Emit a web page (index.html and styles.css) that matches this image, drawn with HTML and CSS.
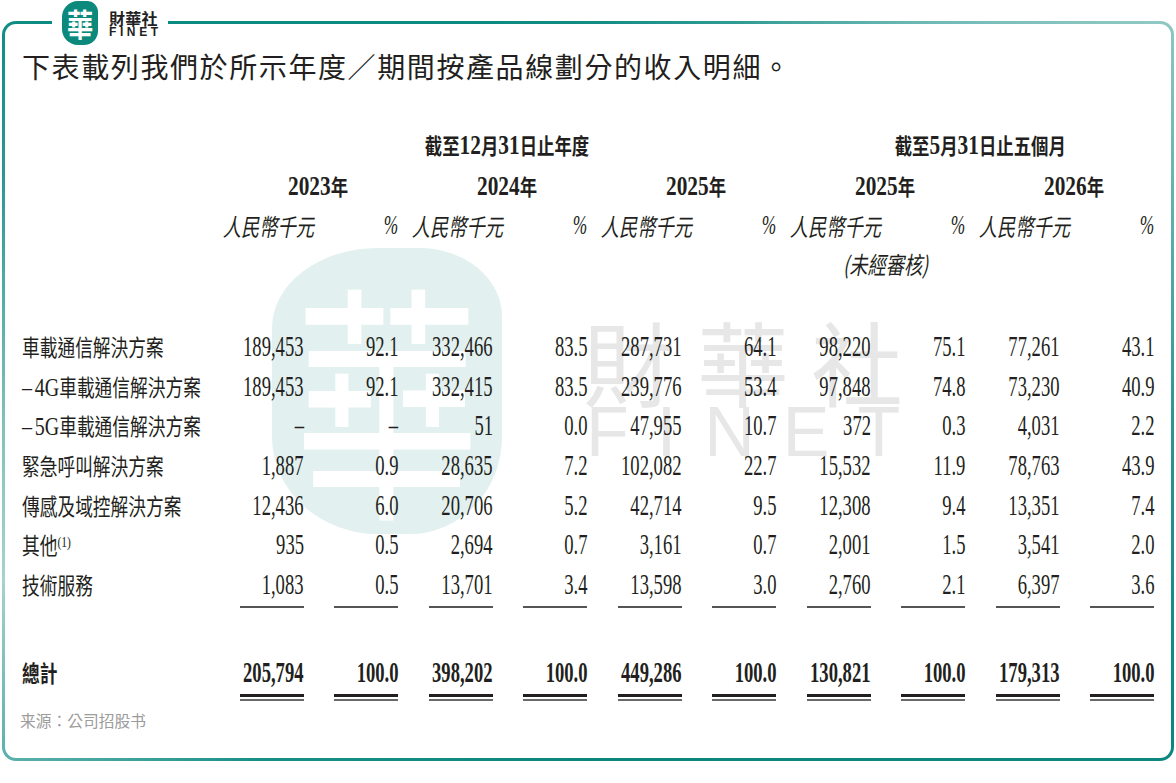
FILE: index.html
```html
<!DOCTYPE html>
<html lang="zh-Hant">
<head>
<meta charset="utf-8">
<title>收入明細</title>
<link rel="stylesheet" href="styles.css">
</head>
<body>
<div class="frame">
  <div class="brand">
    <div class="badge"><span>華</span></div>
    <div class="brand-text">
      <div class="bt-cn">財華社</div>
      <div class="bt-en">FINET</div>
    </div>
  </div>
  <div class="card">
    <div class="wm-logo"><span>華</span></div>
    <div class="wm-text">
      <div class="wm-cn">財華社</div>
      <div class="wm-en">FINET</div>
    </div>

    <h1 class="title">下表載列我們於所示年度／期間按產品線劃分的收入明細。</h1>

    <div class="tbl">
      <!-- group header -->
      <div></div>
      <div class="hd grp g6"><span class="ht b">截至<span class="d">12</span>月<span class="d">31</span>日止年度</span></div>
      <div class="hd grp g4"><span class="ht b">截至<span class="d">5</span>月<span class="d">31</span>日止五個月</span></div>
      <!-- years -->
      <div></div>
      <div class="hd grp g2"><span class="ht b"><span class="d">2023</span>年</span></div>
      <div class="hd grp g2"><span class="ht b"><span class="d">2024</span>年</span></div>
      <div class="hd grp g2"><span class="ht b"><span class="d">2025</span>年</span></div>
      <div class="hd grp g2"><span class="ht b"><span class="d">2025</span>年</span></div>
      <div class="hd grp g2"><span class="ht b"><span class="d">2026</span>年</span></div>
      <!-- units -->
      <div></div>
      <div class="hd unit"><span class="ut">人民幣千元</span></div><div class="hd pc"><span class="pt">%</span></div>
      <div class="hd unit"><span class="ut">人民幣千元</span></div><div class="hd pc"><span class="pt">%</span></div>
      <div class="hd unit"><span class="ut">人民幣千元</span></div><div class="hd pc"><span class="pt">%</span></div>
      <div class="hd unit"><span class="ut">人民幣千元</span></div><div class="hd pc"><span class="pt">%</span></div>
      <div class="hd unit"><span class="ut">人民幣千元</span></div><div class="hd pc"><span class="pt">%</span></div>
      <!-- unaudited -->
      <div class="skip7"></div>
      <div class="hd audit g2"><span class="ut">(未經審核)</span></div>
      <div class="g2"></div>
      <!-- spacer -->
      <div class="full"></div>

      <div class="lb"><span class="lt">車載通信解決方案</span></div>
      <div class="c"><span class="n">189,453</span></div><div class="c"><span class="n">92.1</span></div>
      <div class="c"><span class="n">332,466</span></div><div class="c"><span class="n">83.5</span></div>
      <div class="c"><span class="n">287,731</span></div><div class="c"><span class="n">64.1</span></div>
      <div class="c"><span class="n">98,220</span></div><div class="c"><span class="n">75.1</span></div>
      <div class="c"><span class="n">77,261</span></div><div class="c"><span class="n">43.1</span></div>

      <div class="lb"><span class="lt"><span class="d">– 4G</span>車載通信解決方案</span></div>
      <div class="c"><span class="n">189,453</span></div><div class="c"><span class="n">92.1</span></div>
      <div class="c"><span class="n">332,415</span></div><div class="c"><span class="n">83.5</span></div>
      <div class="c"><span class="n">239,776</span></div><div class="c"><span class="n">53.4</span></div>
      <div class="c"><span class="n">97,848</span></div><div class="c"><span class="n">74.8</span></div>
      <div class="c"><span class="n">73,230</span></div><div class="c"><span class="n">40.9</span></div>

      <div class="lb"><span class="lt"><span class="d">– 5G</span>車載通信解決方案</span></div>
      <div class="c"><span class="n">–</span></div><div class="c"><span class="n">–</span></div>
      <div class="c"><span class="n">51</span></div><div class="c"><span class="n">0.0</span></div>
      <div class="c"><span class="n">47,955</span></div><div class="c"><span class="n">10.7</span></div>
      <div class="c"><span class="n">372</span></div><div class="c"><span class="n">0.3</span></div>
      <div class="c"><span class="n">4,031</span></div><div class="c"><span class="n">2.2</span></div>

      <div class="lb"><span class="lt">緊急呼叫解決方案</span></div>
      <div class="c"><span class="n">1,887</span></div><div class="c"><span class="n">0.9</span></div>
      <div class="c"><span class="n">28,635</span></div><div class="c"><span class="n">7.2</span></div>
      <div class="c"><span class="n">102,082</span></div><div class="c"><span class="n">22.7</span></div>
      <div class="c"><span class="n">15,532</span></div><div class="c"><span class="n">11.9</span></div>
      <div class="c"><span class="n">78,763</span></div><div class="c"><span class="n">43.9</span></div>

      <div class="lb"><span class="lt">傳感及域控解決方案</span></div>
      <div class="c"><span class="n">12,436</span></div><div class="c"><span class="n">6.0</span></div>
      <div class="c"><span class="n">20,706</span></div><div class="c"><span class="n">5.2</span></div>
      <div class="c"><span class="n">42,714</span></div><div class="c"><span class="n">9.5</span></div>
      <div class="c"><span class="n">12,308</span></div><div class="c"><span class="n">9.4</span></div>
      <div class="c"><span class="n">13,351</span></div><div class="c"><span class="n">7.4</span></div>

      <div class="lb"><span class="lt">其他<span class="sup">(1)</span></span></div>
      <div class="c"><span class="n">935</span></div><div class="c"><span class="n">0.5</span></div>
      <div class="c"><span class="n">2,694</span></div><div class="c"><span class="n">0.7</span></div>
      <div class="c"><span class="n">3,161</span></div><div class="c"><span class="n">0.7</span></div>
      <div class="c"><span class="n">2,001</span></div><div class="c"><span class="n">1.5</span></div>
      <div class="c"><span class="n">3,541</span></div><div class="c"><span class="n">2.0</span></div>

      <div class="lb"><span class="lt">技術服務</span></div>
      <div class="c u"><span class="n">1,083</span></div><div class="c u"><span class="n">0.5</span></div>
      <div class="c u"><span class="n">13,701</span></div><div class="c u"><span class="n">3.4</span></div>
      <div class="c u"><span class="n">13,598</span></div><div class="c u"><span class="n">3.0</span></div>
      <div class="c u"><span class="n">2,760</span></div><div class="c u"><span class="n">2.1</span></div>
      <div class="c u"><span class="n">6,397</span></div><div class="c u"><span class="n">3.6</span></div>

      <div class="full"></div>

      <div class="lb"><span class="lt b">總計</span></div>
      <div class="c t"><span class="n b">205,794</span></div><div class="c t"><span class="n b">100.0</span></div>
      <div class="c t"><span class="n b">398,202</span></div><div class="c t"><span class="n b">100.0</span></div>
      <div class="c t"><span class="n b">449,286</span></div><div class="c t"><span class="n b">100.0</span></div>
      <div class="c t"><span class="n b">130,821</span></div><div class="c t"><span class="n b">100.0</span></div>
      <div class="c t"><span class="n b">179,313</span></div><div class="c t"><span class="n b">100.0</span></div>
    </div>

    <p class="source">来源：公司招股书</p>
  </div>
</div>
</body>
</html>
```

FILE: styles.css
```css
html, body {
  margin: 0;
  padding: 0;
  background: #ffffff;
}

body {
  width: 1176px;
  height: 783px;
  overflow: hidden;
  color: #231f20;
  font-family: "Noto Sans CJK TC", "Noto Sans CJK SC", sans-serif;
}

.frame {
  position: relative;
  margin: 21px 2px 0;
  padding: 3px;
  border-radius: 14px;
  background: conic-gradient(from 0deg at 50% 50%,
    #128c84 0deg,
    #2f9b94 22deg,
    #72bbb7 44deg,
    #8fc8c4 57deg,
    #67b4af 70deg,
    #2d9892 92deg,
    #0d8880 118deg,
    #0a867e 180deg,
    #178f88 222deg,
    #52aca7 236deg,
    #a4d3d0 252deg,
    #7dc0bb 268deg,
    #2c9992 290deg,
    #0b8a81 305deg,
    #0b8a81 340deg,
    #128c84 360deg);
}

/* brand badge over the top border */
.brand {
  position: absolute;
  left: 50px;
  top: -21px;
  width: 116px;
  height: 45px;
  background: #fff;
  z-index: 2;
  display: flex;
  align-items: center;
  gap: 11px;
  padding-left: 10px;
  box-sizing: border-box;
}

.badge {
  width: 36px;
  height: 44px;
  background: #0c897d;
  border-radius: 16px 11px 14px 16px;
  display: flex;
  align-items: center;
  justify-content: center;
  flex: none;
}

.badge span {
  color: #fff;
  font-size: 32px;
  font-weight: 700;
  line-height: 1;
  display: inline-block;
  transform: scaleX(.82);
}

.brand-text {
  display: flex;
  flex-direction: column;
  padding-top: 2px;
}

.bt-cn {
  font-size: 16px;
  font-weight: 700;
  line-height: 16px;
  color: #222;
  letter-spacing: 0.3px;
}

.bt-en {
  font-family: "Liberation Sans", Arial, sans-serif;
  font-size: 12px;
  font-weight: 700;
  line-height: 11px;
  letter-spacing: 3.6px;
  color: #222;
  margin-top: 1px;
}

.card {
  position: relative;
  z-index: 0;
  height: 734px;
  box-sizing: border-box;
  border-radius: 11px;
  background: #fff;
  padding: 24px 0 0 17px;
}

/* watermark */
.wm-logo {
  position: absolute;
  z-index: -1;
  left: 267px;
  top: 224px;
  width: 230px;
  height: 286px;
  background: #e2f0ef;
  border-radius: 46% 36% 40% 46% / 28% 24% 34% 34%;
  display: flex;
  align-items: center;
  justify-content: center;
}

.wm-logo span {
  color: #fff;
  font-size: 250px;
  line-height: 1;
  display: inline-block;
  transform: scaleX(.74);
}

.wm-text {
  position: absolute;
  z-index: -1;
  left: 578px;
  top: 291px;
  color: #e7e7e7;
}

.wm-cn {
  font-size: 92px;
  line-height: 90px;
  letter-spacing: 22px;
}

.wm-en {
  font-family: "Liberation Sans", Arial, sans-serif;
  font-size: 70px;
  line-height: 70px;
  letter-spacing: 28px;
  margin-top: -8px;
  margin-left: 3px;
}

.title {
  margin: 0;
  font-size: 28px;
  line-height: 36px;
  font-weight: 400;
  letter-spacing: 1.6px;
  color: #231f20;
}

/* table */
.tbl {
  margin-top: 40px;
  display: grid;
  grid-template-columns: 187px repeat(10, 94.5px);
  grid-template-rows: 40px 42px 38px 38px 44px repeat(6, 39.67px) 44px 44px 49px;
}

.full { grid-column: 1 / -1; }
.g2 { grid-column: span 2; }
.g4 { grid-column: span 4; }
.g6 { grid-column: span 6; }
.skip7 { grid-column: 1 / span 7; }

.hd {
  display: flex;
  align-items: center;
  white-space: nowrap;
}

.grp {
  justify-content: center;
  padding-left: 30px;
}

.ht {
  display: inline-block;
  font-size: 22px;
  transform: scaleX(.79);
  transform-origin: 50% 50%;
}

.b { font-weight: 700; }

.d {
  font-family: "Liberation Serif", "Times New Roman", serif;
  font-size: 27px;
}

.unit {
  justify-content: flex-end;
  margin-right: -10px;
}

.ut {
  display: inline-block;
  font-size: 24px;
  font-style: italic;
  transform: scaleX(.76);
  transform-origin: 100% 50%;
}

.audit {
  justify-content: flex-start;
  padding-left: 67px;
}

.audit .ut {
  transform-origin: 0 50%;
}

.pc {
  justify-content: flex-end;
}

.pt {
  display: inline-block;
  font-family: "Liberation Serif", "Times New Roman", serif;
  font-style: italic;
  font-size: 28px;
  transform: scaleX(.62);
  transform-origin: 100% 50%;
}

.lb {
  display: flex;
  align-items: flex-start;
  line-height: 40px;
  white-space: nowrap;
}

.lt {
  display: inline-block;
  font-size: 23px;
  transform: scaleX(.77);
  transform-origin: 0 50%;
}

.lt .d {
  font-size: 26px;
  word-spacing: -3px;
}

.sup {
  font-family: "Liberation Serif", "Times New Roman", serif;
  font-size: 15px;
  vertical-align: 7px;
  line-height: 1;
}

.c {
  display: flex;
  justify-content: flex-end;
  align-items: flex-start;
  line-height: 40px;
  white-space: nowrap;
}

.n {
  display: inline-block;
  font-family: "Liberation Serif", "Times New Roman", serif;
  font-size: 30px;
  transform: scaleX(.62);
  transform-origin: 100% 50%;
}

.u {
  background: linear-gradient(#555, #555) right bottom / 64px 2px no-repeat;
}

.t {
  background:
    linear-gradient(#231f20, #231f20) right 0 bottom 4px / 64px 3px no-repeat,
    linear-gradient(#6a6a6a, #6a6a6a) right 0 bottom 0 / 64px 2px no-repeat;
}

.source {
  margin: 10px 0 0 -2px;
  font-family: "Noto Sans CJK SC", sans-serif;
  font-size: 15.75px;
  line-height: 20px;
  color: #9c9c9c;
}
```
